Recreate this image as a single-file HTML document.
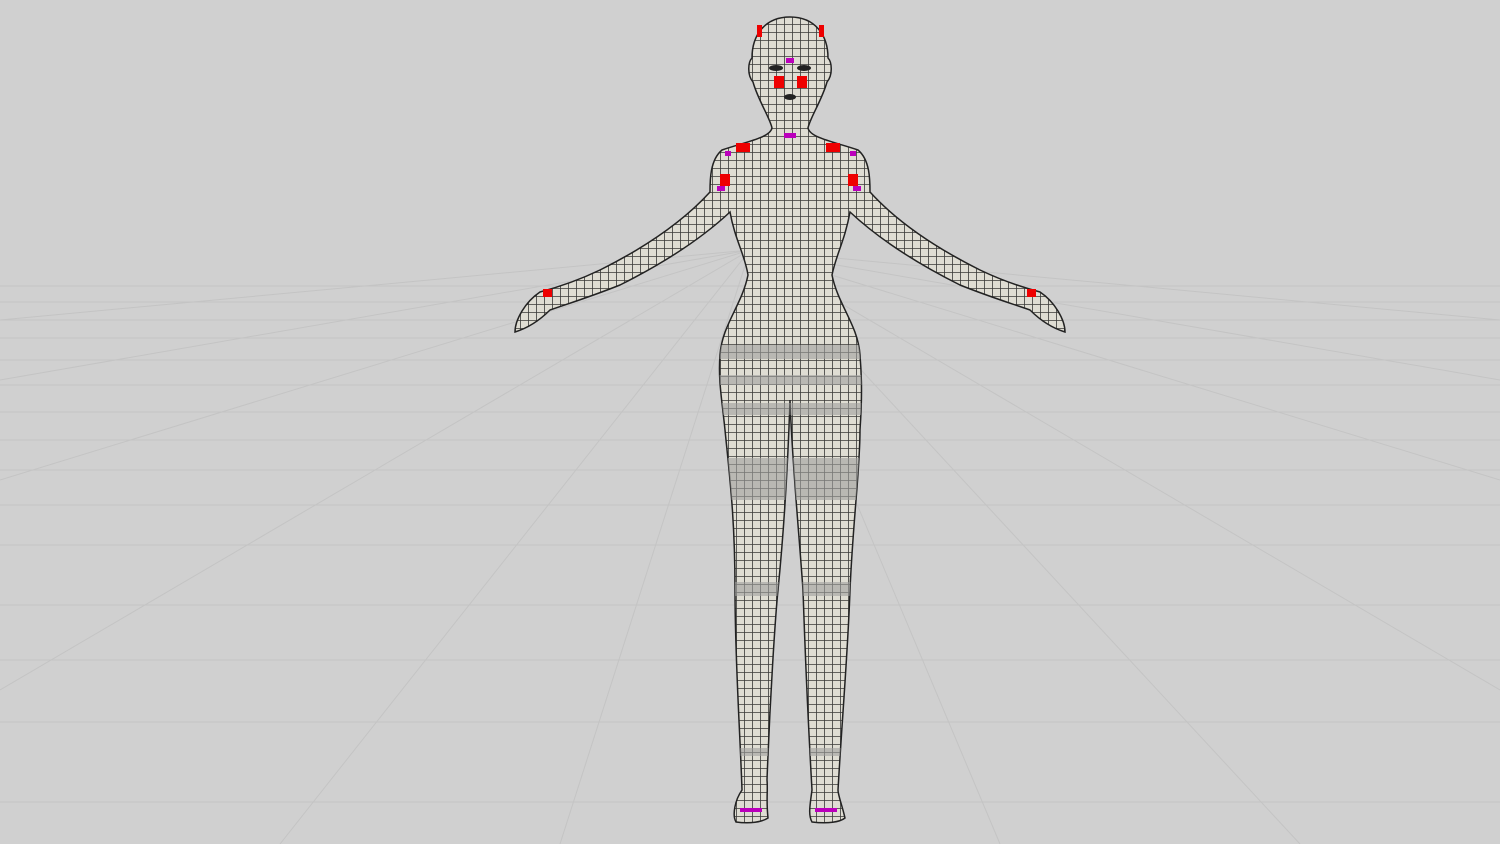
<!DOCTYPE html>
<html><head><meta charset="utf-8"><style>
html,body{margin:0;padding:0;background:#d0d0d0;}
svg{display:block}
</style></head><body>
<svg width="1500" height="844" viewBox="0 0 1500 844" xmlns="http://www.w3.org/2000/svg">
<defs>
<pattern id="mesh" width="8" height="8" patternUnits="userSpaceOnUse">
<rect width="8" height="8" fill="#dfddd3"/>
<path d="M0 0.5H8M0.5 0V8" stroke="#3a3a38" stroke-width="0.8"/>
</pattern>
<clipPath id="body">
<path id="bp" d="M790 17C765 17 752 35 752 58C748 62 747 75 753 82C758 100 770 118 772 128C770 138 745 142 722 150C710 160 710 180 710 192C680 225 640 250 600 270C575 282 555 288 540 292C525 302 515 320 515 332C528 328 540 320 550 310C570 303 590 297 620 285C660 265 700 240 730 212C735 240 745 255 748 275C742 305 722 325 720 355C718 380 722 400 725 430C730 480 735 520 735 590C735 660 740 730 742 790C735 800 732 815 736 822C750 824 762 822 768 818C766 800 768 790 767 780C770 700 775 620 778 590C785 520 788 460 790 400C792 460 798 520 803 590C805 650 808 720 812 790C810 805 808 815 812 822C828 824 840 822 845 818C842 805 838 795 838 790C842 720 848 650 850 590C853 520 860 470 860 430C862 400 862 380 860 355C858 325 838 305 832 275C836 255 845 240 850 212C880 240 920 265 960 285C990 297 1010 303 1030 310C1040 320 1052 328 1065 332C1065 320 1055 302 1040 292C1025 288 1005 282 980 270C940 250 900 225 870 192C870 180 870 160 858 150C835 142 810 138 808 128C810 118 822 100 827 82C833 75 832 62 828 58C828 35 815 17 790 17Z"/>
</clipPath>
</defs>
<rect width="1500" height="844" fill="#d0d0d0"/>
<g stroke="#c4c4c4" stroke-width="1" fill="none">
<path d="M0 286H1500M0 302H1500M0 320H1500M0 338H1500M0 360H1500M0 385H1500M0 412H1500M0 440H1500M0 470H1500M0 505H1500M0 545H1500M0 605H1500M0 660H1500M0 722H1500M0 802H1500"/>
<path d="M750 250L0 690M750 250L0 480M750 250L0 380M750 250L280 844M750 250L560 844M750 250L1000 844M750 250L1300 844M750 250L1500 690M750 250L1500 480M750 250L1500 380M750 250L0 320M750 250L1500 320"/>
</g>
<path d="M790 17C765 17 752 35 752 58C748 62 747 75 753 82C758 100 770 118 772 128C770 138 745 142 722 150C710 160 710 180 710 192C680 225 640 250 600 270C575 282 555 288 540 292C525 302 515 320 515 332C528 328 540 320 550 310C570 303 590 297 620 285C660 265 700 240 730 212C735 240 745 255 748 275C742 305 722 325 720 355C718 380 722 400 725 430C730 480 735 520 735 590C735 660 740 730 742 790C735 800 732 815 736 822C750 824 762 822 768 818C766 800 768 790 767 780C770 700 775 620 778 590C785 520 788 460 790 400C792 460 798 520 803 590C805 650 808 720 812 790C810 805 808 815 812 822C828 824 840 822 845 818C842 805 838 795 838 790C842 720 848 650 850 590C853 520 860 470 860 430C862 400 862 380 860 355C858 325 838 305 832 275C836 255 845 240 850 212C880 240 920 265 960 285C990 297 1010 303 1030 310C1040 320 1052 328 1065 332C1065 320 1055 302 1040 292C1025 288 1005 282 980 270C940 250 900 225 870 192C870 180 870 160 858 150C835 142 810 138 808 128C810 118 822 100 827 82C833 75 832 62 828 58C828 35 815 17 790 17Z" fill="url(#mesh)" stroke="#222" stroke-width="1.5"/>
<g clip-path="url(#body)" fill="#a0a09e" opacity="0.6">
<rect x="700" y="345" width="180" height="14"/>
<rect x="700" y="375" width="180" height="10"/>
<rect x="700" y="403" width="180" height="12"/>
<rect x="700" y="458" width="180" height="42"/>
<rect x="700" y="582" width="180" height="14"/>
<rect x="700" y="748" width="180" height="8"/>
<rect x="560" y="180" width="120" height="60" transform="rotate(-30 620 210)" opacity="0.5"/>
<rect x="900" y="180" width="120" height="60" transform="rotate(30 960 210)" opacity="0.5"/>
</g>
<g fill="#e00">
<rect x="774" y="76" width="10" height="12"/><rect x="797" y="76" width="10" height="12"/>
<rect x="736" y="143" width="14" height="9"/><rect x="826" y="143" width="14" height="9"/>
<rect x="720" y="174" width="10" height="12"/><rect x="848" y="174" width="10" height="12"/>
<rect x="543" y="289" width="9" height="8"/><rect x="1027" y="289" width="9" height="8"/>
<rect x="757" y="25" width="5" height="12"/><rect x="819" y="25" width="5" height="12"/>
</g>
<g fill="#b0b">
<rect x="786" y="58" width="8" height="5"/><rect x="784" y="133" width="12" height="5"/>
<rect x="725" y="151" width="6" height="5"/><rect x="850" y="151" width="6" height="5"/>
<rect x="717" y="186" width="8" height="5"/><rect x="853" y="186" width="8" height="5"/>
<rect x="740" y="808" width="22" height="4"/><rect x="815" y="808" width="22" height="4"/>
</g>
<g fill="#222">
<ellipse cx="776" cy="68" rx="7" ry="3"/><ellipse cx="804" cy="68" rx="7" ry="3"/>
<ellipse cx="790" cy="97" rx="6" ry="3"/>
</g>
</svg>
</body></html>
